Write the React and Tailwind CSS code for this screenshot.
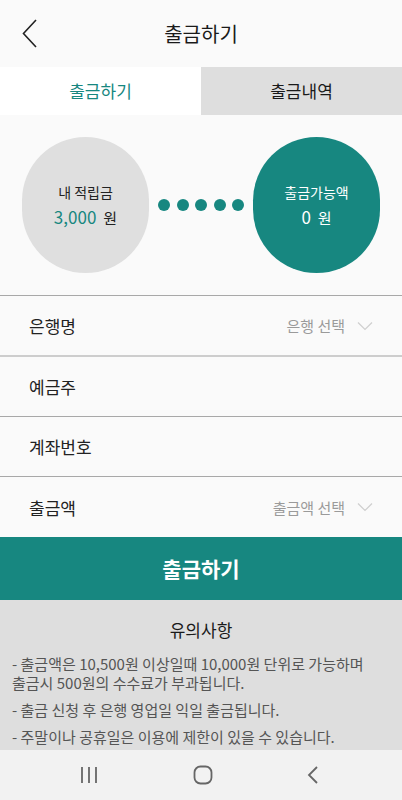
import React from "react";

const font = { fontFamily: '"Noto Sans CJK KR", "Noto Sans", sans-serif' };

const Chevron = () => (
  <svg width="16" height="10" viewBox="0 0 16 10" fill="none">
    <path d="M1 1.5 L8 8.5 L15 1.5" stroke="#cfcfcf" strokeWidth="1.2" />
  </svg>
);

const Row = ({ label, value, className }) => (
  <div className={`shrink-0 flex items-center justify-between pl-[29px] pr-[29px] ${className}`}>
    <span className="text-[17px] leading-none text-[#222]">{label}</span>
    {value && (
      <span className="flex items-center gap-[12px]">
        <span className="text-[15px] leading-none text-[#9a9a9a]">{value}</span>
        <Chevron />
      </span>
    )}
  </div>
);

export default function App() {
  return (
    <div style={font} className="w-[402px] h-[800px] bg-[#fafafa] flex flex-col overflow-hidden">
      {/* Header */}
      <div className="shrink-0 h-[67px] grid grid-cols-[1fr_auto_1fr] items-center">
        <div className="pl-[22px] flex items-center">
          <svg width="15" height="29" viewBox="0 0 15 29" fill="none">
            <path d="M14 1 L1.5 14.5 L14 28" stroke="#222" strokeWidth="1.6" />
          </svg>
        </div>
        <h1 className="text-[20px] leading-none text-[#1a1a1a]">출금하기</h1>
        <div />
      </div>

      {/* Tabs */}
      <div className="shrink-0 h-[48px] grid grid-cols-2">
        <div className="bg-white flex items-center justify-center text-[17px] text-[#178780]">출금하기</div>
        <div className="bg-[#dedede] flex items-center justify-center text-[17px] text-[#1a1a1a]">출금내역</div>
      </div>

      {/* Circles */}
      <div className="shrink-0 h-[181px] flex items-center justify-between px-[22px] border-b border-[#a8a8a8]">
        <div className="w-[127px] h-[136px] rounded-full bg-[#dfdfdf] flex flex-col items-center justify-center gap-[6px]">
          <span className="text-[14px] leading-[18px] text-[#222]">내 적립금</span>
          <span className="leading-[20px]">
            <span className="text-[17px] text-[#178780]">3,000</span>
            <span className="text-[15px] text-[#222] ml-[7px]">원</span>
          </span>
        </div>
        <div className="flex items-center gap-[6.5px]">
          <span className="w-[12px] h-[12px] rounded-full bg-[#178780]" />
          <span className="w-[12px] h-[12px] rounded-full bg-[#178780]" />
          <span className="w-[12px] h-[12px] rounded-full bg-[#178780]" />
          <span className="w-[12px] h-[12px] rounded-full bg-[#178780]" />
          <span className="w-[12px] h-[12px] rounded-full bg-[#178780]" />
        </div>
        <div className="w-[127px] h-[136px] rounded-full bg-[#178780] flex flex-col items-center justify-center gap-[6px] text-white">
          <span className="text-[14px] leading-[18px]">출금가능액</span>
          <span className="leading-[20px]">
            <span className="text-[17px]">0</span>
            <span className="text-[15px] ml-[7px]">원</span>
          </span>
        </div>
      </div>

      {/* Form rows */}
      <Row label="은행명" value="은행 선택" className="h-[61px] border-b-2 border-[#cdcdcd]" />
      <Row label="예금주" className="h-[60px] border-b border-[#a8a8a8]" />
      <Row label="계좌번호" className="h-[60px] border-b border-[#a8a8a8]" />
      <Row label="출금액" value="출금액 선택" className="h-[60px]" />

      {/* Submit */}
      <button className="shrink-0 h-[63px] w-full bg-[#178780] text-white text-[21px] font-semibold flex items-center justify-center">
        출금하기
      </button>

      {/* Notice */}
      <div className="shrink-0 h-[150px] bg-[#dedede] pt-[18px] px-[12px]">
        <h2 className="text-[17px] leading-[24px] text-center text-[#1a1a1a]">유의사항</h2>
        <div className="mt-[12px] flex flex-col gap-[8px] text-[15px] leading-[19px] text-[#555]">
          <p>- 출금액은 10,500원 이상일때 10,000원 단위로 가능하며<br />출금시 500원의 수수료가 부과됩니다.</p>
          <p>- 출금 신청 후 은행 영업일 익일 출금됩니다.</p>
          <p>- 주말이나 공휴일은 이용에 제한이 있을 수 있습니다.</p>
        </div>
      </div>

      {/* System nav */}
      <div className="shrink-0 h-[50px] bg-[#f2f2f2] flex items-center justify-between pl-[80px] pr-[83px]">
        <svg width="18" height="18" viewBox="0 0 18 18" fill="none">
          <path d="M2 1 V17 M9 1 V17 M16 1 V17" stroke="#666" strokeWidth="1.8" />
        </svg>
        <svg width="20" height="20" viewBox="0 0 20 20" fill="none">
          <rect x="1.5" y="1.5" width="17" height="17" rx="6" stroke="#666" strokeWidth="1.8" />
        </svg>
        <svg width="12" height="18" viewBox="0 0 12 18" fill="none">
          <path d="M10 1 L2 9 L10 17" stroke="#666" strokeWidth="1.8" />
        </svg>
      </div>
    </div>
  );
}
